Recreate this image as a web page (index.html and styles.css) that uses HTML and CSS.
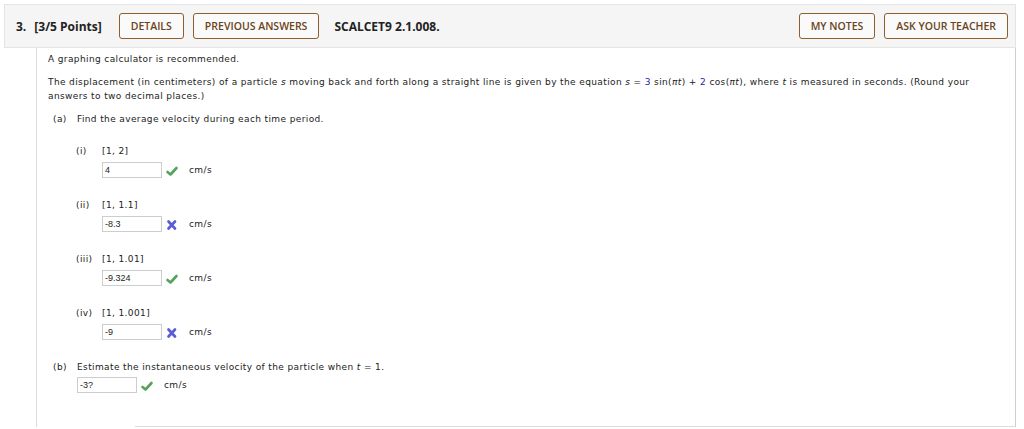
FILE: index.html
```html
<!DOCTYPE html>
<html>
<head>
<meta charset="utf-8">
<link rel="stylesheet" href="styles.css">
</head>
<body>
<div class="question">
  <div class="qhead">
    <span class="qnum">3.</span>
    <span class="qpts">[3/5 Points]</span>
    <span class="btn">DETAILS</span>
    <span class="btn">PREVIOUS ANSWERS</span>
    <span class="qcode">SCALCET9 2.1.008.</span>
    <span class="spacer"></span>
    <span class="btn">MY NOTES</span>
    <span class="btn">ASK YOUR TEACHER</span>
  </div>
  <div class="qbody">
    <p class="p1">A graphing calculator is recommended.</p>
    <p class="p2">The displacement (in centimeters) of a particle <i>s</i> moving back and forth along a straight line is given by the equation <i>s</i> = <span class="num">3</span> sin(<i>πt</i>) + <span class="num">2</span> cos(<i>πt</i>), where <i>t</i> is measured in seconds. (Round your answers to two decimal places.)</p>
    <div class="part">
      <div class="plabel"><span class="pl">(a)</span><span>Find the average velocity during each time period.</span></div>
      <div class="sub">
        <div class="slabel"><span class="sl">(i)</span><span>[1, 2]</span></div>
        <div class="ansrow">
          <span class="inp">4</span>
          <svg class="ic" viewBox="0 0 14 12" width="14" height="12"><path d="M2.5 7 L5.5 9.5 L11.5 3" fill="none" stroke="#55a25a" stroke-width="2.6" stroke-linecap="round" stroke-linejoin="round"/></svg>
          <span class="unit">cm/s</span>
        </div>
      </div>
      <div class="sub">
        <div class="slabel"><span class="sl">(ii)</span><span>[1, 1.1]</span></div>
        <div class="ansrow">
          <span class="inp">-8.3</span>
          <svg class="ic" viewBox="0 0 14 12" width="14" height="12"><path d="M3.5 2.5 L10 9.5 M10 2.5 L3.5 9.5" fill="none" stroke="#5a5ed6" stroke-width="2.7" stroke-linecap="round"/></svg>
          <span class="unit">cm/s</span>
        </div>
      </div>
      <div class="sub">
        <div class="slabel"><span class="sl">(iii)</span><span>[1, 1.01]</span></div>
        <div class="ansrow">
          <span class="inp">-9.324</span>
          <svg class="ic" viewBox="0 0 14 12" width="14" height="12"><path d="M2.5 7 L5.5 9.5 L11.5 3" fill="none" stroke="#55a25a" stroke-width="2.6" stroke-linecap="round" stroke-linejoin="round"/></svg>
          <span class="unit">cm/s</span>
        </div>
      </div>
      <div class="sub">
        <div class="slabel"><span class="sl">(iv)</span><span>[1, 1.001]</span></div>
        <div class="ansrow">
          <span class="inp">-9</span>
          <svg class="ic" viewBox="0 0 14 12" width="14" height="12"><path d="M3.5 2.5 L10 9.5 M10 2.5 L3.5 9.5" fill="none" stroke="#5a5ed6" stroke-width="2.7" stroke-linecap="round"/></svg>
          <span class="unit">cm/s</span>
        </div>
      </div>
    </div>
    <div class="part partb">
      <div class="plabel"><span class="pl">(b)</span><span>Estimate the instantaneous velocity of the particle when <i>t</i> = 1.</span></div>
      <div class="ansrow">
        <span class="inp">-3?</span>
        <svg class="ic" viewBox="0 0 14 12" width="14" height="12"><path d="M2.5 7 L5.5 9.5 L11.5 3" fill="none" stroke="#55a25a" stroke-width="2.6" stroke-linecap="round" stroke-linejoin="round"/></svg>
        <span class="unit">cm/s</span>
      </div>
    </div>
    <div class="tailline"></div>
  </div>
</div>
</body>
</html>
```
FILE: styles.css
```css
html, body { margin: 0; padding: 0; background: #ffffff; }
body { font-family: "DejaVu Sans", Verdana, sans-serif; font-size: 9px; letter-spacing: 0.38px; color: #222; }
.question { padding: 4px 8px 0 4px; }
.qhead {
  height: 42px;
  background: #f5f5f5;
  border: 1px solid #e4e4e4;
  display: flex;
  align-items: center;
  padding: 0 7px 0 11px;
  font-family: "Open Sans", sans-serif;
  letter-spacing: 0;
  color: #222;
}
.qnum { font-weight: 700; font-size: 12px; margin-right: 8px; }
.qpts { font-weight: 700; font-size: 12px; margin-right: 17px; }
.btn {
  border: 1px solid #8e5e2c;
  border-radius: 3px;
  height: 24px;
  display: flex;
  align-items: center;
  padding: 0 11px;
  font-size: 10.5px;
  font-weight: 600;
  color: #6a4420;
  margin-right: 9px;
  background: #fafafa;
}
.btn + .qcode { margin-left: 6px; }
.qcode { font-weight: 700; font-size: 12px; }
.spacer { flex: 1; }
.btn:last-child { margin-right: 0; }
.qbody {
  margin-left: 32px;
  border-left: 1px solid #dcdcdc;
  border-right: 1px solid #cfcfcf;
  padding: 4px 0 0 11px;
  height: 375px;
  position: relative;
}
p { margin: 0; line-height: 14px; }
.p1 { margin-bottom: 9px; }
.p2 { padding-right: 30px; margin-bottom: 9px; }
.num { color: #2424a8; }
.plabel { display: flex; line-height: 14px; }
.pl { width: 29px; padding-left: 5px; box-sizing: border-box; flex: none; }
.sub { margin-left: 28px; margin-top: 18px; }
.sub + .sub { margin-top: 20px; }
.slabel { display: flex; line-height: 14px; }
.sl { width: 26px; flex: none; }
.ansrow { display: flex; align-items: center; margin-top: 4px; margin-left: 26px; height: 16px; }
.inp {
  width: 60px;
  height: 16px;
  box-sizing: border-box;
  border: 1px solid #cdcdcd;
  font-family: "Liberation Sans", Arial, sans-serif;
  font-size: 9px;
  letter-spacing: 0;
  line-height: 14px;
  padding-left: 2px;
  color: #222;
}
.ic { margin-left: 3px; margin-top: 2px; }
.unit { margin-left: 10px; }
.partb { margin-top: 20px; }
.partb .ansrow { margin-left: 29px; margin-top: 3px; }
.tailline {
  position: absolute;
  left: 98px;
  right: 0;
  bottom: 0;
  border-top: 1px solid #dcdcdc;
}
```
